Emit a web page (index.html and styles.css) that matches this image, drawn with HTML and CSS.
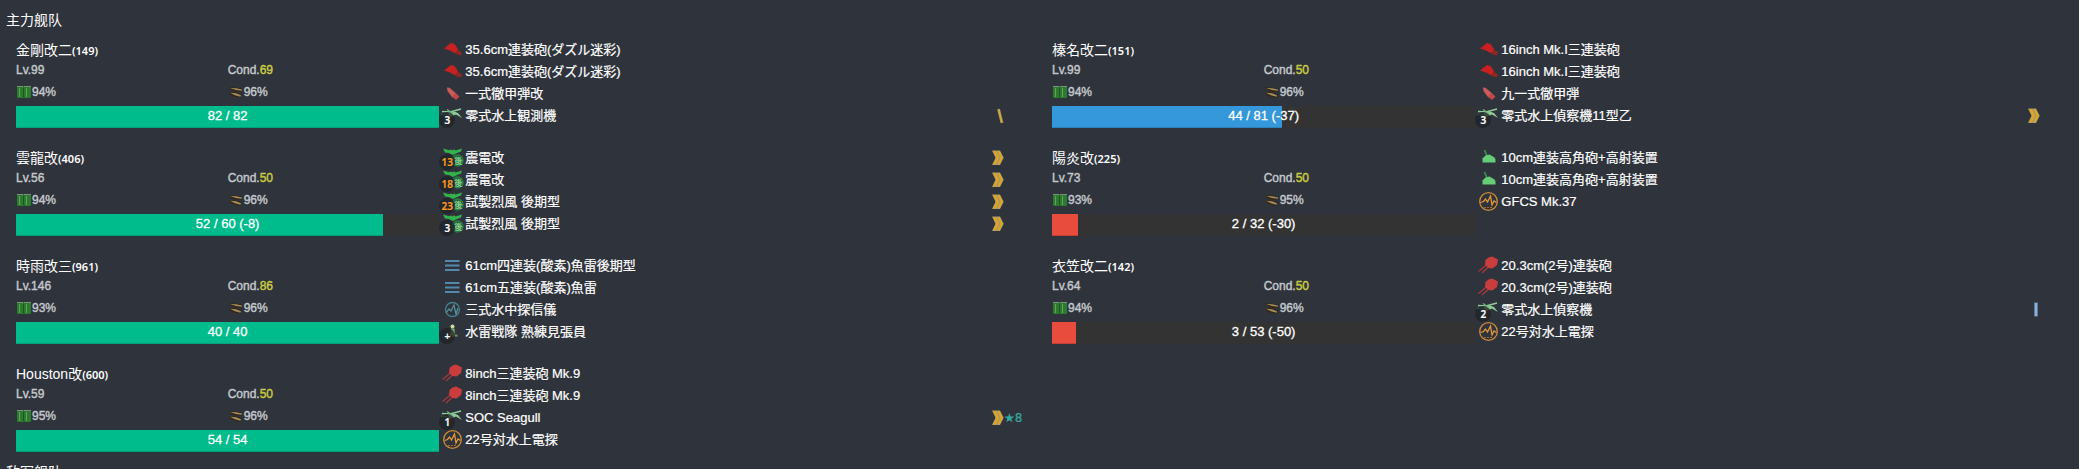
FILE: index.html
```html
<!DOCTYPE html>
<html lang="ja">
<head>
<meta charset="utf-8">
<title>主力舰队</title>
<link rel="stylesheet" href="styles.css">
</head>
<body>
<svg class="defs" aria-hidden="true">
  <symbol id="gun-l" viewBox="0 0 26 22"><path d="M14 7l4 3 5 3.500-1 3-4-1-5-3z" fill="#8e2626"/><path d="M5 9.500L12 4l3.500 1L19 10l-3 4-5-2.500z" fill="#c92121"/></symbol>
  <symbol id="gun-m" viewBox="0 0 26 22"><path d="M12 9.500L3.500 16.500M14 11.500L7 18" stroke="#a93838" stroke-width="1.300"/><path d="M10.500 5L13.500 2.500l3.500-1 6 3-1 5.500-4.500 3.500-4-.5-3.500-3z" fill="#cb3d3d"/></symbol>
  <symbol id="gun-h" viewBox="0 0 26 22"><path d="M9.500 3l3 7" stroke="#3f8a52" stroke-width="1.800"/><path d="M7.500 15.500v-4l3-3 4-1 5 3 1 2v3z" fill="#66cc77"/></symbol>
  <symbol id="shell" viewBox="0 0 26 22"><path d="M8 4.500l2.500.2 7 6-4 4L8.500 8z" fill="#cf5a5a"/><path d="M16.500 10l4 3.500-3.500 3.500-4-3.500z" fill="#c04848"/></symbol>
  <symbol id="plane" viewBox="0 0 26 22"><path d="M3 6.500l8 .5 11-3" fill="none" stroke="#8fcc98" stroke-width="1.400"/><path d="M2 9.500h8" stroke="#4f9d63" stroke-width="1.400"/><path d="M9 8l6-1.500 4 1.500 4 5-6-3.500-6 2.500z" fill="#8fcc98"/><path d="M8 4.500l6 4M7 12.500l6-3" stroke="#75b582" stroke-width="1.200"/></symbol>
  <symbol id="fighter" viewBox="0 0 26 22"><circle cx="18.500" cy="13.500" r="5.500" fill="#245f37" stroke="#268442" stroke-width="1.300"/><path d="M4 1.500l6 1.800 2-.8 1.500 1 1.500-1.300L16.500 3.500l6.500-2-1 3-4 1.500-4 2-4-2-4-.5z" fill="#33b34b"/></symbol>
  <symbol id="torpedo" viewBox="0 0 26 22"><path d="M6 6h14.500M6 10.500h14.500M6 15h14.500" stroke="#5588ad" stroke-width="2"/></symbol>
  <symbol id="sonar" viewBox="0 0 26 22"><circle cx="13.500" cy="10.500" r="7" fill="none" stroke="#458088" stroke-width="1.400"/><path d="M7 14l3-4 2 2 3-6 1 5 1 4 2-6" fill="none" stroke="#5795a0" stroke-width="1.200"/></symbol>
  <symbol id="radar" viewBox="0 0 26 22"><circle cx="13.500" cy="10.500" r="8.800" fill="none" stroke="#cf8a35" stroke-width="1.300"/><path d="M5.500 11.500l3-1 2-2.500 2 3 3-6 1.500 9 2-4 2.500 1.500" fill="none" stroke="#e6993a" stroke-width="1.300"/><path d="M9 16.500h9" stroke="#99692f" stroke-dasharray="2 1"/></symbol>
  <symbol id="lookout" viewBox="0 0 26 22"><circle cx="13.500" cy="5.500" r="2" fill="#c4e0a0"/><path d="M12 7.500h3.500l.5 6.500h-5z" fill="#82a873"/><path d="M11 14l7-.5 1 2h-8z" fill="#6f9668"/></symbol>
  <symbol id="fuel" viewBox="0 0 16 14"><rect x="1" y="1" width="7" height="12" rx="1" fill="#2b7a2d"/><rect x="8" y="1" width="7" height="12" rx="1" fill="#2b7a2d"/><rect x="3" y="3" width="1" height="9" fill="#62a35c"/><rect x="10" y="3" width="1" height="9" fill="#62a35c"/><rect x="7" y="3" width="1" height="9" fill="#1f5523"/><rect x="1" y="1" width="6" height="1" fill="#7d917d"/><rect x="8" y="1" width="7" height="1" fill="#7d917d"/></symbol>
  <symbol id="ammo" viewBox="0 0 16 14"><path d="M1 4l2-2 5 .5 6 1 1 3L8 7zM1 8l3-1.500 5 1 5 1.500-1 4L7 12 3 10.500z" fill="#33291b"/><path d="M2 3l6 .2 6 1.300v1.200L8 5zM2 7.800l6 .5 5 2-.5 1.500L7 10.300z" fill="#a68c5d"/></symbol>
  <symbol id="ace" viewBox="0 0 12 22"><path d="M0 3.500h8l3.700 7.200L8 18H0l3.500-7.300z" fill="#a9996d"/><path d="M1 4h2.800L7 10.700 3.800 17.500H1l3-6.800zM5.500 4h2.200l3.300 6.700-3.300 6.800H5.500l3-6.800z" fill="#dca526"/></symbol>
  <symbol id="slash" viewBox="0 0 12 22"><path d="M6.500 4l3.500 14" stroke="#9c8a5a" stroke-width="3"/><path d="M6.700 4.500l3 13" stroke="#d3aa3b" stroke-width="1.600"/></symbol>
  <symbol id="bar" viewBox="0 0 12 22"><path d="M8 3.500v14" stroke="#5c7da3" stroke-width="4"/><path d="M8 4v13" stroke="#8fb0d6" stroke-width="2"/></symbol>
</svg>
<main>
  <h2 class="title">主力舰队</h2>
  <div class="fleet" id="fleet"></div>
  <h2 class="title">敌军舰队</h2>
</main>
<script src="fleet.js"></script>
</body>
</html>
```

FILE: styles.css
```css
* { box-sizing: border-box; }
html { scrollbar-width: none; background: #2f343c; }
body {
  margin: 0;
  padding: 10px 1px 0 6px;
  background: #2f343c;
  color: #fff;
  font: 13px/22px "Liberation Sans", "Noto Sans CJK JP", "Noto Sans CJK SC", sans-serif;
}
.defs { position: absolute; width: 0; height: 0; }
.title { margin: 0; font-size: 14px; line-height: 20px; font-weight: 400; font-family: "Liberation Sans", "Noto Sans CJK SC", sans-serif; }
.fleet { display: grid; grid-template-columns: 1fr 1fr; }
.ship { display: grid; grid-template-columns: 5fr 7fr; padding: 9px 10px 10px; align-items: start; }
.name { display: flex; margin: 0; font-size: 14px; line-height: 22px; font-weight: 400; white-space: nowrap; }
.name small { font: 600 11px/24px "Noto Sans", sans-serif; height: 22px; }
.stats { display: grid; grid-template-columns: 1fr 1fr; grid-template-rows: 18px 26px; font-size: 12px; font-weight: 400; color: #c4c8cc; margin-bottom: 1px; -webkit-text-stroke: 0.4px; }
.stats span { display: flex; align-items: center; }
.stats svg { width: 16px; height: 14px; }
.stats b { font-weight: 400; color: #cdcd42; }
.hp { position: relative; height: 22px; background: #333; text-align: center; line-height: 20px; -webkit-text-stroke: 0.3px; }
.fill { height: 100%; box-shadow: inset 0 -1px 0 rgba(0, 0, 0, 0.15); }
.fill.ok { background: #00bc8c; }
.fill.half { background: #3498db; }
.fill.low { background: #e74c3c; }
.hp span { position: absolute; inset: 0; }
.equips { list-style: none; margin: 0; padding: 0; -webkit-text-stroke: 0.2px; }
.equips li { display: flex; height: 22px; white-space: nowrap; }
.icon { position: relative; width: 26px; height: 22px; }
.icon svg { display: block; width: 26px; height: 22px; }
.count {
  position: absolute; left: 0; top: 7px; width: 16px; height: 16px; border-radius: 50%;
  background: rgba(32, 34, 37, 0.75); text-align: center; font: 600 10px/16px "Noto Sans", sans-serif;
}
.count.full { color: #ff9a1f; }
.kind { position: absolute; left: 15px; top: 10px; width: 8px; font: 8px/8px "Noto Sans CJK JP", sans-serif; color: #8fdd9f; }
.label { flex: 1; }
.prof { width: 12px; height: 22px; }
.level { width: 28px; color: #36a9a0; font-family: "DejaVu Sans", sans-serif; font-size: 12px; }
```

FILE: fleet.js
```js
const ships = [
  ["金剛改二", 149, 99, 69, 94, 96, 82, 82, "ok", [["gun-l", "35.6cm連装砲(ダズル迷彩)"], ["gun-l", "35.6cm連装砲(ダズル迷彩)"], ["shell", "一式徹甲弾改"], ["plane", "零式水上観測機", "3", "slash"]]],
  ["榛名改二", 151, 99, 50, 94, 96, 44, 81, "half", [["gun-l", "16inch Mk.I三連装砲"], ["gun-l", "16inch Mk.I三連装砲"], ["shell", "九一式徹甲弾"], ["plane", "零式水上偵察機11型乙", "3", "ace"]]],
  ["雲龍改", 406, 56, 50, 94, 96, 52, 60, "ok", [["fighter", "震電改", "13", "ace"], ["fighter", "震電改", "18", "ace"], ["fighter", "試製烈風 後期型", "23", "ace"], ["fighter", "試製烈風 後期型", "3", "ace"]]],
  ["陽炎改", 225, 73, 50, 93, 95, 2, 32, "low", [["gun-h", "10cm連装高角砲+高射装置"], ["gun-h", "10cm連装高角砲+高射装置"], ["radar", "GFCS Mk.37"]]],
  ["時雨改三", 961, 146, 86, 93, 96, 40, 40, "ok", [["torpedo", "61cm四連装(酸素)魚雷後期型"], ["torpedo", "61cm五連装(酸素)魚雷"], ["sonar", "三式水中探信儀"], ["lookout", "水雷戦隊 熟練見張員", "+"]]],
  ["衣笠改二", 142, 64, 50, 94, 96, 3, 53, "low", [["gun-m", "20.3cm(2号)連装砲"], ["gun-m", "20.3cm(2号)連装砲"], ["plane", "零式水上偵察機", "2", "bar"], ["radar", "22号対水上電探"]]],
  ["Houston改", 600, 59, 50, 95, 96, 54, 54, "ok", [["gun-m", "8inch三連装砲 Mk.9"], ["gun-m", "8inch三連装砲 Mk.9"], ["plane", "SOC Seagull", "1", "ace", "★8"], ["radar", "22号対水上電探"]]]
];

const use = (id, cls = "") => `<svg class="${cls}" aria-hidden="true"><use href="#${id}"/></svg>`;

const equip = ([icon, label, count, prof, level = ""]) => `<li>
  <span class="icon">${use(icon)}${icon === "fighter" ? `<span class="kind">後</span>` : ""}${count ? `<span class="count ${count.length > 1 ? "full" : ""}">${count}</span>` : ""}</span>
  <span class="label">${label}</span>${prof ? use(prof, "prof") : ""}<span class="level">${level}</span></li>`;

document.getElementById("fleet").innerHTML = ships.map(([name, id, lv, cond, fuel, ammo, hp, max, state, equips]) => `
<article class="ship">
  <div>
    <h3 class="name">${name}<small>(${id})</small></h3>
    <div class="stats">
      <span>Lv.${lv}</span><span>Cond.<b>${cond}</b></span>
      <span>${use("fuel")}${fuel}%</span><span>${use("ammo")}${ammo}%</span>
    </div>
    <div class="hp"><div class="fill ${state}" style="width:${hp / max * 100}%"></div><span>${hp} / ${max}${hp < max ? ` (${hp - max})` : ""}</span></div>
  </div>
  <ul class="equips">${equips.map(equip).join("")}</ul>
</article>`).join("");
```
